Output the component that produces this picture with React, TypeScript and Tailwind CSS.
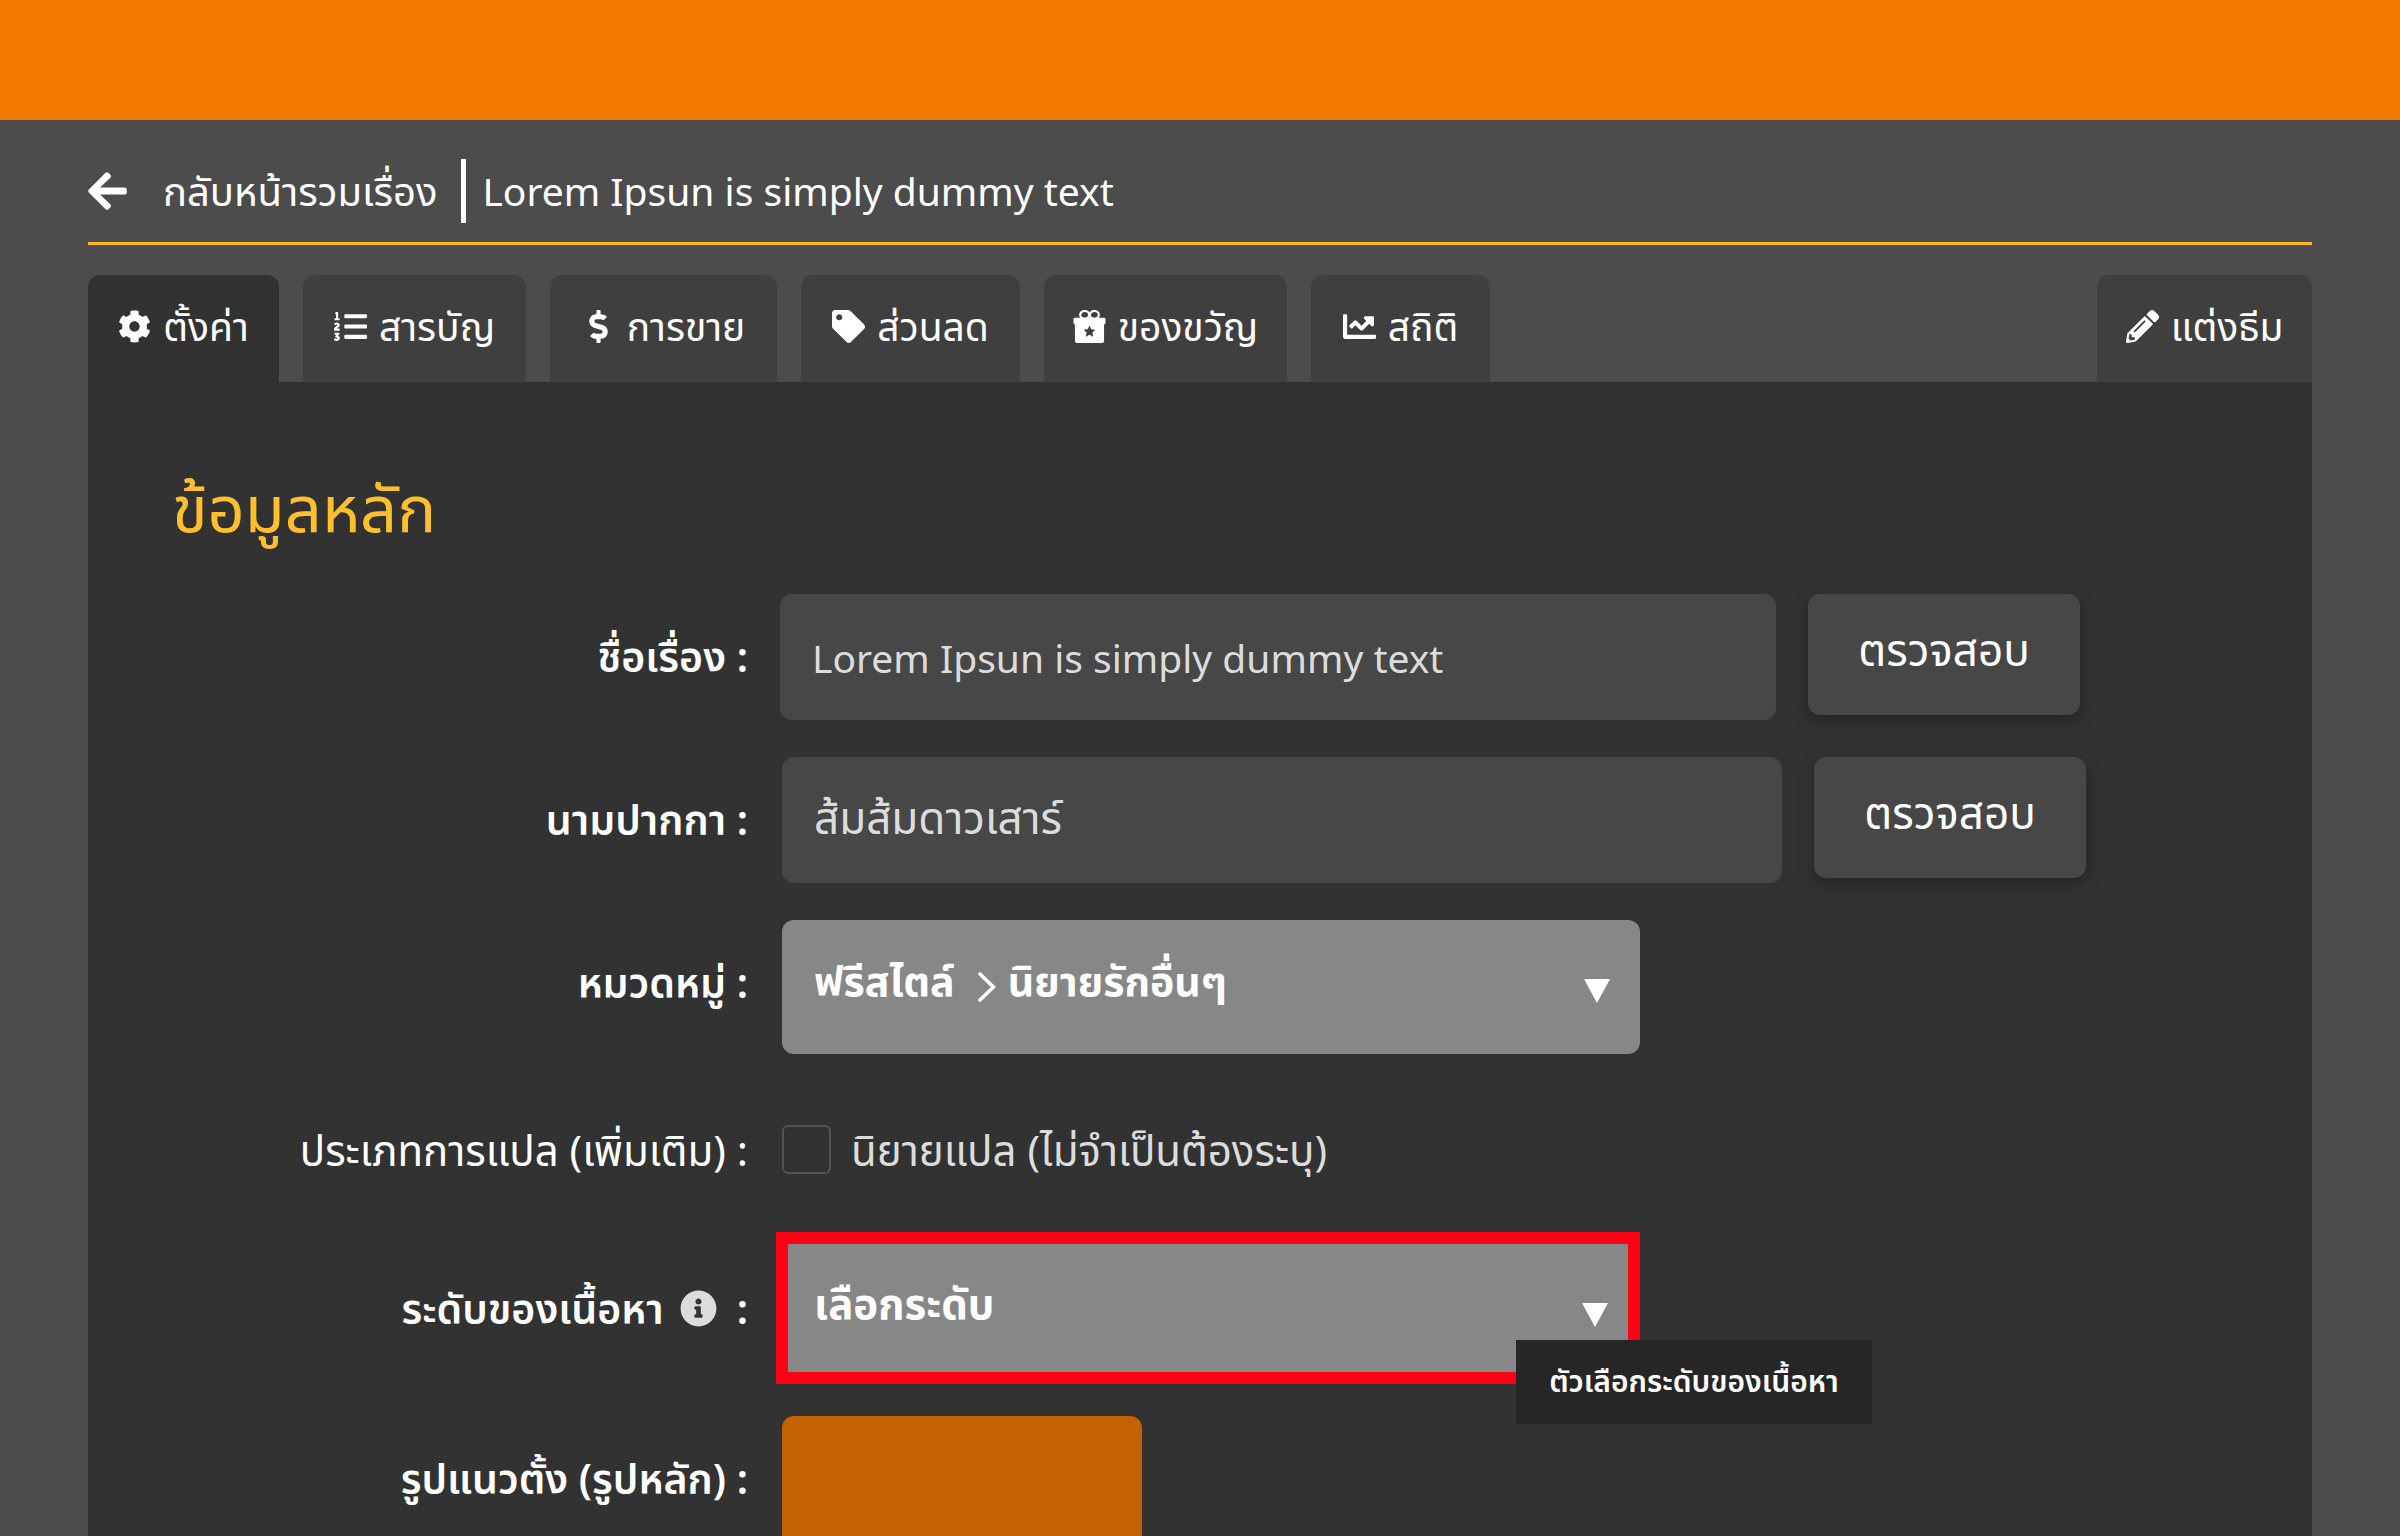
import React from 'react';
import { FaArrowLeft, FaChartLine, FaCog, FaDollarSign, FaInfoCircle, FaListOl, FaPencilAlt, FaTag } from 'react-icons/fa';

const GiftIcon = ({ className }: { className?: string }) => (
  <svg viewBox="0 0 34 34" className={className} aria-hidden="true">
    <g fill="none" stroke="currentColor" strokeWidth="2.2">
      <ellipse cx="12" cy="5" rx="4.6" ry="4" />
      <ellipse cx="22" cy="5" rx="4.6" ry="4" />
    </g>
    <path
      fill="currentColor"
      fillRule="evenodd"
      d="M2 8h30q1.500 0 1.500 1.500v4q0 1.500-1.500 1.500v17q0 2-2 2H4q-2 0-2-2V15q-1.500 0-1.500-1.500v-4Q.5 8 2 8Zm15 8-1.800 3.800-4.200.6 3 2.900-.7 4.200 3.700-2 3.700 2-.7-4.200 3-2.900-4.200-.6Z"
    />
  </svg>
);

const tabs = [
  { icon: FaCog, label: 'ตั้งค่า', width: 'min-w-[191px]', active: true },
  { icon: FaListOl, label: 'สารบัญ', width: 'min-w-[223px]' },
  { icon: FaDollarSign, label: 'การขาย', width: 'min-w-[227px]' },
  { icon: FaTag, label: 'ส่วนลด', width: 'min-w-[219px]' },
  { icon: GiftIcon, label: 'ของขวัญ', width: 'min-w-[243px]' },
  { icon: FaChartLine, label: 'สถิติ', width: 'min-w-[179px]' },
  { icon: FaPencilAlt, label: 'แต่งธีม', width: 'min-w-[215px] ml-auto' }
];

const inputClass = 'h-[126px] rounded-xl bg-[#474747] px-8 text-[#dcdcdc] outline-none';
const buttonClass =
  'h-[121px] w-[272px] rounded-xl bg-[#474747] pb-3 text-[44px] text-white shadow-[0_6px_16px_rgba(0,0,0,0.3)]';
const labelClass = 'w-[660px] shrink-0 text-right leading-[60px] text-white';

const Arrow = ({ className }: { className?: string }) => (
  <svg viewBox="0 0 26 24" className={`pointer-events-none absolute h-6 w-[26px] fill-white ${className}`} aria-hidden="true">
    <path d="M0 0h26L13 24Z" />
  </svg>
);

const App = () => {
  return (
    <div className="flex min-h-screen flex-col bg-[#4c4c4c] font-['Noto_Sans','Noto_Sans_Thai',sans-serif] text-white">
      <header className="h-[120px] bg-[#f37a00]" />

      <main className="mx-[88px] flex grow flex-col">
        <div className="flex h-[125px] items-center border-b-[3px] border-[#fbb929] pt-5 text-[39px]">
          <a href="#stories" className="flex items-center gap-9 text-[40px]">
            <FaArrowLeft className="h-11 w-[39px]" />
            <span>กลับหน้ารวมเรื่อง</span>
          </a>
          <span className="mr-4 ml-6 h-16 w-[5px] bg-white" />
          <h1>Lorem Ipsun is simply dummy text</h1>
        </div>

        {/* แถบเมนู */}
        <nav className="mt-[30px] flex h-[107px] gap-6">
          {tabs.map((tab) => {
            const Icon = tab.icon;
            return (
              <button
                key={tab.label}
                type="button"
                className={`flex items-center justify-center gap-3 rounded-t-xl pb-1 text-[39px] ${tab.width} ${
                  tab.active ? 'bg-[#323232]' : 'bg-[#3f3f3f]'
                }`}
              >
                <Icon className="size-[33px]" />
                <span>{tab.label}</span>
              </button>
            );
          })}
        </nav>

        <section className="flex grow flex-col bg-[#323232] pt-20">
          <h2 className="ml-[84px] h-[132px] text-[65px] leading-[90px] text-[#ffc02e]">ข้อมูลหลัก</h2>

          <form className="flex grow flex-col">
            <div className="flex">
              <label htmlFor="title" className={`${labelClass} pt-8 text-[41px] font-semibold`}>ชื่อเรื่อง :</label>
              <div className="ml-8 flex gap-8">
                <input id="title" className={`${inputClass} w-[996px] text-[39px]`} defaultValue="Lorem Ipsun is simply dummy text" />
                <button type="button" className={buttonClass}>ตรวจสอบ</button>
              </div>
            </div>

            <div className="mt-[37px] flex">
              <label htmlFor="penname" className={`${labelClass} pt-8 text-[41px] font-semibold`}>นามปากกา :</label>
              <div className="ml-[34px] flex gap-8">
                <input id="penname" className={`${inputClass} w-[1000px] text-[44px]`} defaultValue="ส้มส้มดาวเสาร์" />
                <button type="button" className={buttonClass}>ตรวจสอบ</button>
              </div>
            </div>

            <div className="mt-[37px] flex">
              <label htmlFor="category" className={`${labelClass} pt-8 text-[41px] font-semibold`}>หมวดหมู่ :</label>
              <div className="relative ml-[34px]">
                <select id="category" className="h-[134px] w-[858px] appearance-none rounded-xl bg-[#878787] px-8 pb-3 text-[41px] font-bold outline-none">
                  <option>{'ฟรีสไตล์\u00a0\u00a0\u00a0\u00a0\u00a0นิยายรักอื่นๆ'}</option>
                </select>
                {/* ลูกศรคั่นระหว่างหมวดหลักกับหมวดย่อย */}
                <svg viewBox="0 0 18 30" className="pointer-events-none absolute top-[52px] left-[196px] h-[30px] w-[18px]" aria-hidden="true">
                  <path d="M2 2 15.500 15 2 28" fill="none" stroke="white" strokeWidth="3.6" strokeLinecap="round" />
                </svg>
                <Arrow className="top-[59px] right-[30px]" />
              </div>
            </div>

            <div className="mt-[71px] flex h-[49px] items-center">
              <span className={`${labelClass} text-[42px]`}>ประเภทการแปล (เพิ่มเติม) :</span>
              <label className="ml-[34px] flex items-center gap-5 text-[42px] text-[#dcdcdc]">
                <input type="checkbox" className="size-[49px] appearance-none rounded-md border-2 border-[#545454]" />
                นิยายแปล (ไม่จำเป็นต้องระบุ)
              </label>
            </div>

            <div className="mt-[58px] flex">
              <label htmlFor="rating" className={`${labelClass} flex items-center justify-end gap-4 text-[41px] font-semibold`}>
                ระดับของเนื้อหา
                <FaInfoCircle className="size-[37px] text-[#dcdcdc]" />
                <span className="pl-1">:</span>
              </label>
              <div className="relative ml-7">
                <select id="rating" className="block h-[152px] w-[864px] appearance-none border-12 border-[#ff0015] bg-[#878787] px-[26px] pb-3 text-[42px] font-bold outline-none">
                  <option>เลือกระดับ</option>
                </select>
                <Arrow className="top-[71px] right-8" />
                <div role="tooltip" className="absolute top-[108px] left-[740px] flex h-[84px] w-[356px] items-center justify-center bg-[#262626] pb-1 text-[30px] font-semibold whitespace-nowrap">
                  ตัวเลือกระดับของเนื้อหา
                </div>
              </div>
            </div>

            <div className="mt-8 flex grow">
              <span className={`${labelClass} pt-8 text-[41px] font-semibold`}>รูปแนวตั้ง (รูปหลัก) :</span>
              <div className="ml-[34px] w-[360px] rounded-t-xl bg-[#c26200]" />
            </div>
          </form>
        </section>
      </main>
    </div>
  );
};

export default App;
